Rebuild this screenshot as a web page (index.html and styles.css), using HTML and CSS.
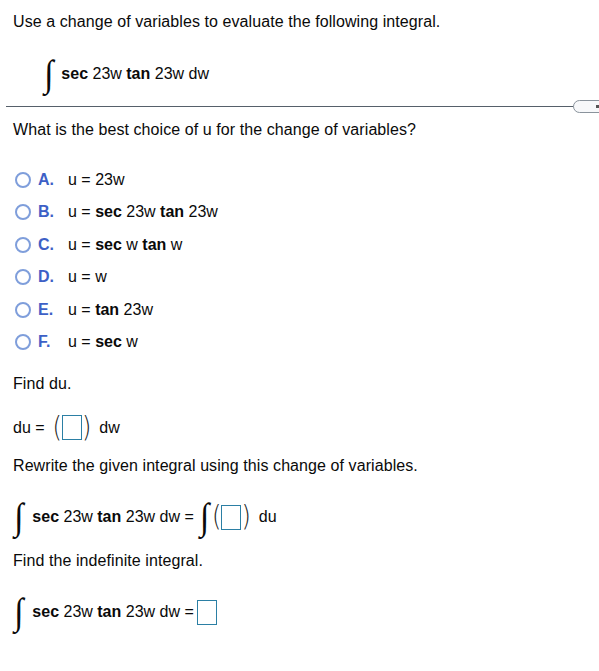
FILE: index.html
```html
<!DOCTYPE html>
<html>
<head>
<meta charset="utf-8">
<link rel="stylesheet" href="styles.css">
</head>
<body>
<div class="page">
  <p class="txt l1">Use a change of variables to evaluate the following integral.</p>
  <div class="expr e1"><span class="int">∫</span><span class="m"><b>sec</b> 23w <b>tan</b> 23w dw</span></div>
  <div class="rule"><span class="pill"><span class="dot"></span></span></div>
  <p class="txt q">What is the best choice of u for the change of variables?</p>
  <div class="opts">
    <div class="opt"><span class="radio"></span><span class="let">A.</span><span class="m">u = 23w</span></div>
    <div class="opt"><span class="radio"></span><span class="let">B.</span><span class="m">u = <b>sec</b> 23w <b>tan</b> 23w</span></div>
    <div class="opt"><span class="radio"></span><span class="let">C.</span><span class="m">u = <b>sec</b> w <b>tan</b> w</span></div>
    <div class="opt"><span class="radio"></span><span class="let">D.</span><span class="m">u = w</span></div>
    <div class="opt"><span class="radio"></span><span class="let">E.</span><span class="m">u = <b>tan</b> 23w</span></div>
    <div class="opt"><span class="radio"></span><span class="let">F.</span><span class="m">u = <b>sec</b> w</span></div>
  </div>
  <p class="txt fd">Find du.</p>
  <div class="row du"><span class="m">du =</span><span class="par l">(</span><span class="box"></span><span class="par r">)</span><span class="m dw">dw</span></div>
  <p class="txt rw">Rewrite the given integral using this change of variables.</p>
  <div class="row ir"><span class="int">∫</span><span class="m"><b>sec</b> 23w <b>tan</b> 23w dw =</span><span class="int i2">∫</span><span class="par l">(</span><span class="box"></span><span class="par r">)</span><span class="m dw">du</span></div>
  <p class="txt fi">Find the indefinite integral.</p>
  <div class="row lr"><span class="int">∫</span><span class="m"><b>sec</b> 23w <b>tan</b> 23w dw =</span><span class="box b3"></span></div>
</div>
</body>
</html>
```
FILE: styles.css
```css
html, body { margin: 0; padding: 0; background: #fff; }
body { font-family: "Liberation Sans", Arial, sans-serif; color: #0a0a0a; }
.page { position: relative; width: 599px; height: 671px; overflow: hidden; }
.txt { margin: 0; padding-left: 13px; font-size: 16px; line-height: 20px; letter-spacing: 0.08px; }
.m { font-size: 16px; line-height: 20px; white-space: nowrap; }
.m b { font-weight: bold; }
.l1 { padding-top: 12px; }
.expr { display: flex; align-items: center; height: 40px; margin-top: 22px; }
.int { font-family: "Liberation Serif", serif; font-size: 34px; line-height: 38px; display: inline-block; transform: scaleY(1.1); }
.e1 .int { margin-left: 44px; margin-right: 8px; }
.rule { position: relative; margin: 12px 0 0 6px; height: 1px; background: #56606a; width: 570px; }
.pill { position: absolute; left: 567px; top: -6px; width: 40px; height: 11px; border: 1px solid #8a939c; border-radius: 7px; background: #f7f8fa; }
.dot { position: absolute; left: 22px; top: 4px; width: 3px; height: 3px; background: #555; }
.q { margin-top: 13px; }
.opts { display: flex; flex-direction: column; gap: 12.4px; margin-top: 30px; padding-left: 15px; }
.opt { display: flex; align-items: center; height: 20px; }
.radio { width: 12px; height: 12px; border: 2px solid #7f9edb; border-radius: 50%; background: #fff; margin-right: 7px; }
.let { color: #3d60c6; font-weight: bold; font-size: 16px; width: 30px; }
.fd { margin-top: 22px; }
.row { display: flex; align-items: center; padding-left: 13px; }
.du { height: 26px; margin-top: 21px; }
.par { font-family: "DejaVu Sans", sans-serif; font-weight: 200; font-size: 24px; line-height: 26px; color: #222; transform: scaleY(1.15); display: inline-block; }
.du .par.l { margin-left: 8px; }
.box { width: 18px; height: 23px; border: 1.5px solid #2b7fa4; background: #fff; }
.dw { margin-left: 8px; }
.rw { margin-top: 15px; }
.ir { height: 37px; margin-top: 23px; }
.ir .int, .lr .int { margin-left: 1px; margin-right: 9px; }
.ir .i2 { margin-left: 6px; margin-right: 3px; }
.fi { margin-top: 15px; }
.lr { height: 37px; margin-top: 23px; }
.b3 { margin-left: 3px; }
```
